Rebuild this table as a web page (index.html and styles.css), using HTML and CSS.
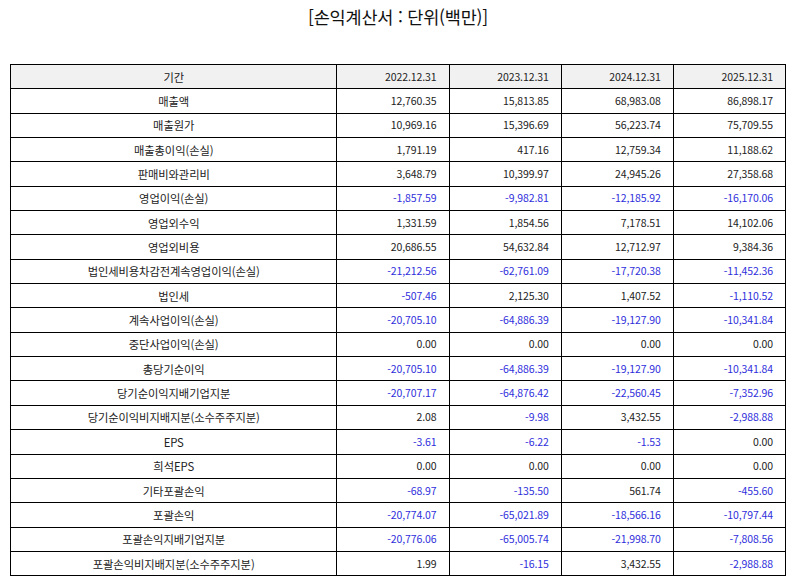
FILE: index.html
```html
<!DOCTYPE html>
<html lang="ko">
<head>
<meta charset="utf-8">
<title>손익계산서</title>
<link rel="stylesheet" href="styles.css">
</head>
<body>
<div class="page">
  <h1 class="title">[손익계산서 : 단위(백만)]</h1>
  <table class="fin">
    <colgroup>
      <col class="c-label"><col class="c-num"><col class="c-num"><col class="c-num"><col class="c-num">
    </colgroup>
    <thead>
      <tr class="head"><th>기간</th><th>2022.12.31</th><th>2023.12.31</th><th>2024.12.31</th><th>2025.12.31</th></tr>
    </thead>
    <tbody>
      <tr><td>매출액</td><td>12,760.35</td><td>15,813.85</td><td>68,983.08</td><td>86,898.17</td></tr>
      <tr><td>매출원가</td><td>10,969.16</td><td>15,396.69</td><td>56,223.74</td><td>75,709.55</td></tr>
      <tr><td>매출총이익(손실)</td><td>1,791.19</td><td>417.16</td><td>12,759.34</td><td>11,188.62</td></tr>
      <tr><td>판매비와관리비</td><td>3,648.79</td><td>10,399.97</td><td>24,945.26</td><td>27,358.68</td></tr>
      <tr><td>영업이익(손실)</td><td class="neg">-1,857.59</td><td class="neg">-9,982.81</td><td class="neg">-12,185.92</td><td class="neg">-16,170.06</td></tr>
      <tr><td>영업외수익</td><td>1,331.59</td><td>1,854.56</td><td>7,178.51</td><td>14,102.06</td></tr>
      <tr><td>영업외비용</td><td>20,686.55</td><td>54,632.84</td><td>12,712.97</td><td>9,384.36</td></tr>
      <tr><td>법인세비용차감전계속영업이익(손실)</td><td class="neg">-21,212.56</td><td class="neg">-62,761.09</td><td class="neg">-17,720.38</td><td class="neg">-11,452.36</td></tr>
      <tr><td>법인세</td><td class="neg">-507.46</td><td>2,125.30</td><td>1,407.52</td><td class="neg">-1,110.52</td></tr>
      <tr><td>계속사업이익(손실)</td><td class="neg">-20,705.10</td><td class="neg">-64,886.39</td><td class="neg">-19,127.90</td><td class="neg">-10,341.84</td></tr>
      <tr><td>중단사업이익(손실)</td><td>0.00</td><td>0.00</td><td>0.00</td><td>0.00</td></tr>
      <tr><td>총당기순이익</td><td class="neg">-20,705.10</td><td class="neg">-64,886.39</td><td class="neg">-19,127.90</td><td class="neg">-10,341.84</td></tr>
      <tr><td>당기순이익지배기업지분</td><td class="neg">-20,707.17</td><td class="neg">-64,876.42</td><td class="neg">-22,560.45</td><td class="neg">-7,352.96</td></tr>
      <tr><td>당기순이익비지배지분(소수주주지분)</td><td>2.08</td><td class="neg">-9.98</td><td>3,432.55</td><td class="neg">-2,988.88</td></tr>
      <tr><td>EPS</td><td class="neg">-3.61</td><td class="neg">-6.22</td><td class="neg">-1.53</td><td>0.00</td></tr>
      <tr><td>희석EPS</td><td>0.00</td><td>0.00</td><td>0.00</td><td>0.00</td></tr>
      <tr><td>기타포괄손익</td><td class="neg">-68.97</td><td class="neg">-135.50</td><td>561.74</td><td class="neg">-455.60</td></tr>
      <tr><td>포괄손익</td><td class="neg">-20,774.07</td><td class="neg">-65,021.89</td><td class="neg">-18,566.16</td><td class="neg">-10,797.44</td></tr>
      <tr><td>포괄손익지배기업지분</td><td class="neg">-20,776.06</td><td class="neg">-65,005.74</td><td class="neg">-21,998.70</td><td class="neg">-7,808.56</td></tr>
      <tr><td>포괄손익비지배지분(소수주주지분)</td><td>1.99</td><td class="neg">-16.15</td><td>3,432.55</td><td class="neg">-2,988.88</td></tr>
    </tbody>
  </table>
</div>
</body>
</html>
```

FILE: styles.css
```css
html, body {
  margin: 0;
  padding: 0;
  background: #ffffff;
}
body {
  font-family: "Noto Sans CJK KR", "Noto Sans", sans-serif;
  color: #222222;
}
.page {
  padding: 0 8px 0 10px;
}
.title {
  margin: 0;
  padding-top: 5px;
  height: 64px;
  box-sizing: border-box;
  text-align: center;
  font-size: 17.5px;
  font-weight: normal;
  line-height: 24px;
  color: #111111;
  letter-spacing: -0.2px;
}
.fin {
  width: 776px;
  border-collapse: collapse;
  table-layout: fixed;
  font-size: 10.5px;
  border: 1.5px solid #000;
}
.c-label { width: 326px; }
.c-num { width: 112px; }
.fin th, .fin td {
  border: 1.5px solid #000;
  height: 24.35px;
  padding: 0 12px 0 4px;
  box-sizing: border-box;
  font-weight: normal;
  line-height: 14px;
  text-align: right;
  white-space: nowrap;
  letter-spacing: -0.1px;
}
.fin th:first-child, .fin td:first-child {
  text-align: center;
  padding: 0 4px;
  font-size: 11.3px;
}
.head th {
  background: #f1f1f1;
}
.fin td.neg {
  color: #2f2fdc;
}
```
